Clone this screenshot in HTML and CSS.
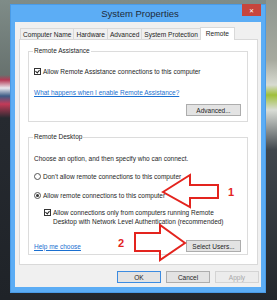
FILE: index.html
```html
<!DOCTYPE html>
<html lang="en">
<head>
    <meta charset="UTF-8">
    <meta name="viewport" content="width=device-width, initial-scale=1.0">
    <title>System Properties</title>
    <link rel="stylesheet" href="styles.css">
</head>
<body>

    <div class="window">
        <div class="titlebar">
            <span class="title">System Properties</span>
            <span class="close">&#x2715;</span>
        </div>
        <div class="client">
            <div class="tabs">
                <span class="tab">Computer Name</span>
                <span class="tab">Hardware</span>
                <span class="tab">Advanced</span>
                <span class="tab">System Protection</span>
                <span class="tab active">Remote</span>
            </div>
            <div class="panel">
                <fieldset class="group assist">
                    <legend>Remote Assistance</legend>
                    <div class="row">
                        <span class="check on"></span>
                        <span>Allow Remote Assistance connections to this computer</span>
                    </div>
                    <a class="link link-assist" href="#">What happens when I enable Remote Assistance?</a>
                    <div class="row right">
                        <button class="btn">Advanced...</button>
                    </div>
                </fieldset>

                <fieldset class="group desktop">
                    <legend>Remote Desktop</legend>
                    <p class="line">Choose an option, and then specify who can connect.</p>
                    <div class="row radio-row first">
                        <span class="radio"></span>
                        <span>Don't allow remote connections to this computer</span>
                    </div>
                    <div class="row radio-row">
                        <span class="radio on"></span>
                        <span>Allow remote connections to this computer</span>
                    </div>
                    <div class="row sub">
                        <span class="check on"></span>
                        <span>Allow connections only from computers running Remote<br>Desktop with Network Level Authentication (recommended)</span>
                    </div>
                    <div class="row spread">
                        <a class="link" href="#">Help me choose</a>
                        <button class="btn">Select Users...</button>
                    </div>
                </fieldset>
            </div>
            <div class="buttons">
                <button class="btn big default">OK</button>
                <button class="btn big">Cancel</button>
                <button class="btn big" disabled>Apply</button>
            </div>
        </div>

        <!-- annotation arrows drawn over the dialog -->
        <svg class="marks" width="256" height="289" viewBox="10 4 256 289">
            <polygon points="163,192 190,175 190,185 218,185 218,198 190,198 190,207" fill="none" stroke="#e3241e" stroke-width="2" stroke-linejoin="miter"/>
            <polygon points="185,243 160,225 160,233 135,233 135,251 160,251 160,260" fill="none" stroke="#e3241e" stroke-width="2" stroke-linejoin="miter"/>
        </svg>
        <span class="num num1">1</span>
        <span class="num num2">2</span>
    </div>

</body>
</html>
```

FILE: styles.css
```css
body {
    margin: 0;
    width: 277px;
    height: 300px;
    overflow: hidden;
    font-family: "Liberation Sans", Arial, sans-serif;
    font-size: 6.5px;
    color: #1e1e1e;
    background:
        linear-gradient(180deg, rgba(0,0,0,0) 0, rgba(0,0,0,0) 75px, #b53a55 80px, #e8e8ee 88px, #3d5b86 96px, #c43a58 104px, #262a30 118px, #1f2328 300px) left / 10px 300px no-repeat,
        linear-gradient(180deg, #8f9790 0, #a7aa9f 60px, #d8dbd2 85px, #9fbf3a 95px, #d9ddd6 110px, #40474d 150px, #23272c 300px) right / 11px 300px no-repeat,
        linear-gradient(180deg, #7f8c88 0, #59625f 120px, #22262b 300px);
}
.window {
    position: relative;
    margin: 4px 0 0 10px;
    width: 256px;
    height: 289px;
    box-sizing: border-box;
    padding: 0 4px 5px 4px;
    background-color: #5cadf5;
    border: 1px solid #4a9be6;
}
.titlebar {
    position: relative;
    height: 17px;
    display: flex;
    align-items: center;
    justify-content: center;
}
.title {
    font-size: 9.5px;
    color: #1c2b3a;
    margin-left: 4px;
}
.close {
    position: absolute;
    top: -1px;
    right: 0;
    width: 19px;
    height: 12px;
    background-color: #c7453c;
    color: #fff;
    font-size: 6px;
    display: flex;
    align-items: center;
    justify-content: center;
}
.client {
    background-color: #f0f0f0;
    height: 265px;
    padding: 6px 3px 0 4px;
    box-sizing: border-box;
}
.tabs {
    display: flex;
    align-items: flex-end;
    height: 11px;
    padding-left: 1px;
}
.tab {
    height: 11px;
    box-sizing: border-box;
    padding: 0 2px;
    border: 1px solid #d9d9d9;
    border-bottom: none;
    background-color: #f0f0f0;
    display: flex;
    align-items: center;
    font-size: 6.6px;
    margin-right: -1px;
}
.tab.active {
    height: 13px;
    background-color: #fff;
    margin-bottom: -1px;
    padding: 0 5px 2px 5px;
    position: relative;
}
.panel {
    background-color: #fff;
    border: 1px solid #d9d9d9;
    height: 226px;
    box-sizing: border-box;
    padding: 7px 9px 0 8px;
}
.group {
    margin: 0;
    border: 1px solid #dcdcdc;
    padding: 0 5px;
    min-width: 0;
}
.group legend {
    padding: 0 1px;
    line-height: 8px;
    margin-left: -1px;
}
.assist {
    height: 75px;
    box-sizing: border-box;
    padding-top: 12px;
}
.desktop {
    margin-top: 11px;
    height: 122px;
    box-sizing: border-box;
    padding-top: 13px;
}
.row {
    display: flex;
    align-items: center;
    line-height: 9px;
}
.row.right {
    justify-content: flex-end;
    margin-top: 7px;
    margin-right: 1px;
}
.line {
    margin: 0;
    line-height: 9px;
}
.link {
    display: block;
    color: #1a6fd0;
    line-height: 9px;
}
.link-assist {
    margin-top: 12px;
}
.check {
    width: 7px;
    height: 7px;
    box-sizing: border-box;
    border: 1px solid #333;
    margin-right: 2px;
    flex-shrink: 0;
    position: relative;
}
.check.on::after {
    content: "";
    position: absolute;
    left: 1px;
    top: 0;
    width: 2px;
    height: 3px;
    border: solid #222;
    border-width: 0 1px 1px 0;
    transform: rotate(40deg);
}
.radio {
    width: 7px;
    height: 7px;
    box-sizing: border-box;
    border: 1px solid #555;
    border-radius: 50%;
    margin-right: 2px;
    position: relative;
}
.radio.on::after {
    content: "";
    position: absolute;
    left: 1px;
    top: 1px;
    width: 3px;
    height: 3px;
    border-radius: 50%;
    background-color: #333;
}
.radio-row {
    margin-top: 10px;
}
.radio-row.first {
    margin-top: 9px;
}
.row.sub {
    margin-top: 8px;
    margin-left: 10px;
    align-items: flex-start;
}
.row.sub .check {
    margin-top: 1px;
}
.row.spread {
    justify-content: space-between;
    margin-top: 14px;
    margin-right: 1px;
}
.btn {
    font-family: "Liberation Sans", Arial, sans-serif;
    font-size: 6.5px;
    color: #1e1e1e;
    width: 55px;
    height: 12px;
    padding: 0;
    background-color: #e3e3e3;
    border: 1px solid #adadad;
}
.buttons {
    display: flex;
    justify-content: flex-end;
    gap: 5px;
    margin-top: 6px;
    margin-right: -1px;
}
.btn.big {
    width: 44px;
}
.btn.default {
    border-color: #3c8be0;
}
.btn:disabled {
    color: #a8a8a8;
    border-color: #d4d4d4;
    background-color: #ececec;
}
.marks {
    position: absolute;
    left: -1px;
    top: -1px;
}
.num {
    position: absolute;
    color: #e3241e;
    font-weight: bold;
    font-size: 11px;
    line-height: 11px;
}
.num1 {
    left: 217px;
    top: 182px;
}
.num2 {
    left: 107px;
    top: 233px;
}
```
